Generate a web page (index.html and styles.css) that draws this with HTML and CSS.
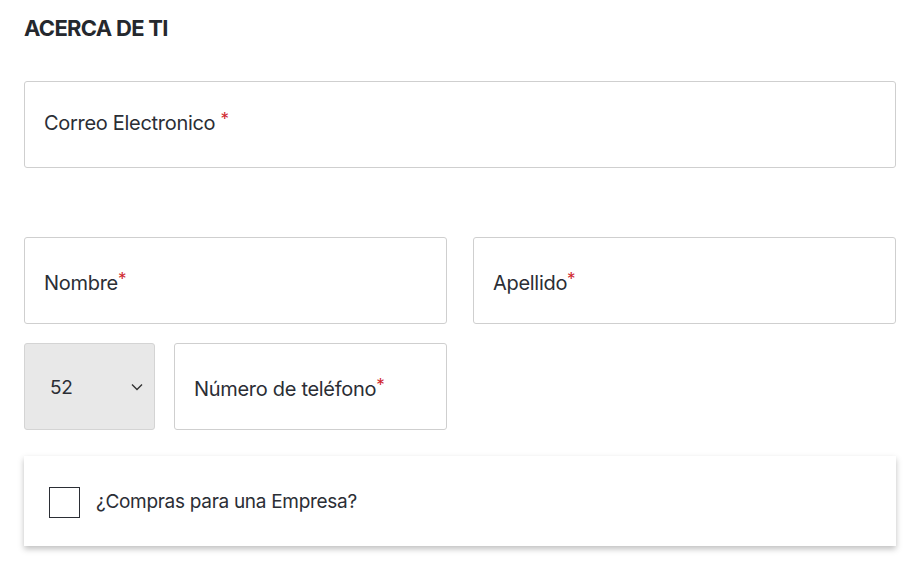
FILE: index.html
```html
<!DOCTYPE html>
<html lang="es">
<head>
<meta charset="utf-8">
<link rel="stylesheet" href="styles.css">
</head>
<body>
<main class="form">
  <h2 class="title">ACERCA DE TI</h2>
  <div class="field field-email"><span class="label label-email">Correo Electronico <span class="req">*</span></span></div>
  <div class="row row-name">
    <div class="field"><span class="label">Nombre<span class="req">*</span></span></div>
    <div class="field"><span class="label">Apellido<span class="req">*</span></span></div>
  </div>
  <div class="row row-phone">
    <div class="phone">
      <div class="select"><span class="code">52</span>
        <svg class="chev" width="12" height="8" viewBox="0 0 12 8"><path d="M1 1.5l5 5 5-5" fill="none" stroke="#333" stroke-width="1.4"/></svg>
      </div>
      <div class="field field-tel"><span class="label">Número de teléfono<span class="req">*</span></span></div>
    </div>
    <div></div>
  </div>
  <div class="card">
    <span class="box"></span>
    <span class="card-text">¿Compras para una Empresa?</span>
  </div>
</main>
</body>
</html>
```
FILE: styles.css
```css
* { box-sizing: border-box; }
html, body { margin: 0; padding: 0; background: #fff; }
body {
  font-family: Inter, Roboto, "Liberation Sans", Arial, sans-serif;
  color: #2b2e35;
}
.form {
  padding: 15px 25px 32px 24px;
  width: 921px;
}
.title {
  margin: 0;
  font-size: 22px;
  font-weight: 700;
  letter-spacing: -0.7px;
  line-height: 26px;
  color: #25282e;
}
.field {
  height: 87px;
  border: 1px solid #cfcfcf;
  border-radius: 3px;
  display: flex;
  align-items: center;
  padding-left: 19px;
  background: #fff;
}
.label {
  font-size: 20px;
  line-height: 24px;
  letter-spacing: -0.3px;
  position: relative;
  top: 0;
}
.label-email { top: -4px; }
.req { color: #d0262e; font-size: 17px; vertical-align: 5px; }
.field-email { margin-top: 40px; }
.row {
  display: grid;
  grid-template-columns: 1fr 1fr;
  column-gap: 26px;
}
.row-name { margin-top: 69px; }
.row-phone { margin-top: 19px; }
.phone {
  display: grid;
  grid-template-columns: 131px 1fr;
  column-gap: 19px;
}
.select {
  height: 87px;
  background: #e8e8e8;
  border: 1px solid #d4d4d4;
  border-radius: 3px;
  display: flex;
  align-items: center;
  justify-content: space-between;
  padding: 0 11px 0 25px;
}
.code { font-size: 19px; letter-spacing: -0.3px; position: relative; top: 1px; }
.chev { display: block; }
.card {
  margin-top: 26px;
  height: 90px;
  background: #fff;
  box-shadow: 0 3px 6px rgba(0,0,0,0.25);
  display: flex;
  align-items: center;
  padding-left: 25px;
}
.box {
  width: 31px;
  height: 31px;
  border: 1.5px solid #2b2e35;
  margin-right: 16px;
  position: relative;
  top: 1px;
}
.card-text { font-size: 19px; letter-spacing: -0.3px; }
```
